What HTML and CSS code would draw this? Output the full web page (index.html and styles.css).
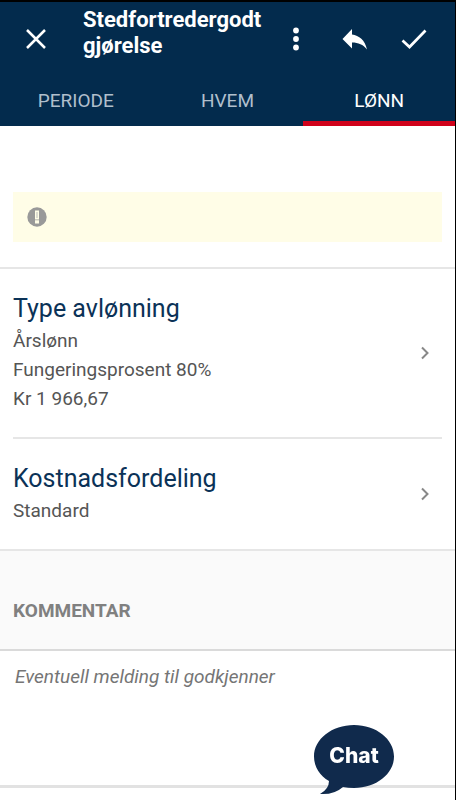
FILE: index.html
```html
<!DOCTYPE html>
<html lang="no">
<head>
<meta charset="utf-8">
<meta name="viewport" content="width=device-width, initial-scale=1">
<title>Stedfortredergodtgjørelse</title>
<link rel="stylesheet" href="styles.css">
</head>
<body>
<header class="header">
  <div class="toolbar">
    <button class="icon-button close" type="button" aria-label="Lukk">
      <svg width="24" height="24" viewBox="0 0 24 24"><path d="M3 3l18 18M21 3L3 21" fill="none" stroke="currentColor" stroke-width="2.500"/></svg>
    </button>
    <h1 class="title">Stedfortredergodt<wbr>gjørelse</h1>
    <div class="actions">
      <button class="icon-button" type="button" aria-label="Meny">
        <svg width="28" height="28" viewBox="0 0 28 28" fill="currentColor"><circle cx="14" cy="5.500" r="2.900"/><circle cx="14" cy="14" r="2.900"/><circle cx="14" cy="22.500" r="2.900"/></svg>
      </button>
      <button class="icon-button" type="button" aria-label="Tilbake">
        <svg width="28" height="28" viewBox="0 0 28 28" fill="currentColor"><path d="M11 4v5.500C18 10.500 24 15 26 24.500 22 19.500 17.500 17.500 11 17.500V23.500L1.500 14z"/></svg>
      </button>
      <button class="icon-button" type="button" aria-label="Lagre">
        <svg width="28" height="28" viewBox="0 0 28 28"><path d="M2.500 15.500l7 6.500L25.500 5.500" fill="none" stroke="currentColor" stroke-width="2.700"/></svg>
      </button>
    </div>
  </div>
  <nav class="tabs">
    <a class="tab" href="#periode">PERIODE</a>
    <a class="tab" href="#hvem">HVEM</a>
    <a class="tab active" href="#lonn" aria-current="page">LØNN</a>
  </nav>
</header>
<main>
  <section class="notice-area">
    <div class="notice">
      <svg width="20" height="20" viewBox="0 0 20 20" role="img" aria-label="Merk"><circle cx="10" cy="10" r="9.700" fill="#999"/><path d="M8 3.500h4v9H8zM8 13.300h4v3.200H8z" fill="#fffde7"/><path d="M9.500 5h1v6h-1z" fill="#bbb"/></svg>
    </div>
  </section>
  <div class="list">
    <a class="row" href="#type">
      <div>
        <h2 class="row-title">Type avlønning</h2>
        <p class="row-text">Årslønn</p>
        <p class="row-text">Fungeringsprosent 80%</p>
        <p class="row-text">Kr 1 966,67</p>
      </div>
      <svg class="chevron" width="10" height="14" viewBox="0 0 10 14"><path d="M2 1.500L7.500 7 2 12.500"/></svg>
    </a>
    <a class="row" href="#fordeling">
      <div>
        <h2 class="row-title">Kostnadsfordeling</h2>
        <p class="row-text">Standard</p>
      </div>
      <svg class="chevron" width="10" height="14" viewBox="0 0 10 14"><path d="M2 1.500L7.500 7 2 12.500"/></svg>
    </a>
  </div>
  <label class="comment-label" for="comment">KOMMENTAR</label>
  <textarea class="comment" id="comment" placeholder="Eventuell melding til godkjenner"></textarea>
</main>
<button class="chat" type="button">
  <svg class="bubble" width="80" height="70" viewBox="0 0 80 70"><path fill="#102a4c" d="M40 0C62 0 80 14 80 31.500S62 63 40 63Q34 63 29 62Q20 70 6 69Q15 64 15 56C6 51 0 42 0 31.500 0 14 18 0 40 0z"/></svg>
  <span class="chat-text">Chat</span>
</button>
</body>
</html>
```
FILE: styles.css
```css
* {
  box-sizing: border-box;
}

body {
  margin: 0;
  min-height: 100vh;
  border-top: 2px solid #000;
  border-right: 1px solid #000;
  background: #fff;
  color: #555;
  font-family: Roboto, "Liberation Sans", sans-serif;
  font-size: 19px;
}

h1, h2, p {
  margin: 0;
}

a {
  color: inherit;
  text-decoration: none;
}

button {
  padding: 0;
  border: 0;
  background: none;
  color: #fff;
  cursor: pointer;
}

svg {
  display: block;
}

.header {
  background: #032b4d;
  color: #fff;
}

.toolbar {
  display: flex;
  align-items: center;
  height: 74px;
  padding: 0 27px 0 24px;
}

.icon-button {
  flex: none;
}

.title {
  flex: 1;
  margin-left: 35px;
  padding-bottom: 12px;
  font-size: 22px;
  line-height: 26px;
  font-weight: 700;
}

.actions {
  display: flex;
  gap: 31px;
}

.tabs {
  display: grid;
  grid-template-columns: repeat(3, 1fr);
}

.tab {
  height: 50px;
  border-bottom: 5px solid transparent;
  color: #b0bfcc;
  line-height: 49px;
  text-align: center;
}

.tab.active {
  border-color: #d0021b;
  color: #fff;
}

.notice-area {
  padding: 66px 13px 25px;
  border-bottom: 2px solid #e6e6e6;
}

.notice {
  display: flex;
  align-items: center;
  height: 50px;
  padding: 0 14px;
  background: #fffde7;
}

.list {
  padding: 0 13px;
  border-bottom: 2px solid #e6e6e6;
}

.row {
  display: flex;
  align-items: center;
  justify-content: space-between;
  padding: 23px 12px 24px 0;
}

.row + .row {
  border-top: 2px solid #e6e6e6;
}

.row-title {
  color: #0b3257;
  font-size: 25px;
  line-height: 34px;
  font-weight: 400;
}

.row-text {
  line-height: 29px;
}

.chevron {
  fill: none;
  stroke: #888;
  stroke-width: 2;
}

.comment-label {
  display: block;
  padding: 45px 13px 23px;
  border-bottom: 2px solid #dadada;
  background: #fafafa;
  color: #808080;
  line-height: 30px;
  font-weight: 700;
}

.comment {
  display: block;
  width: 100%;
  height: 137px;
  padding: 14px 15px;
  border: 0;
  border-bottom: 3px solid #e2e2e2;
  outline: 0;
  resize: none;
  color: #555;
  font: italic 19px/24px Roboto, "Liberation Sans", sans-serif;
}

.comment::placeholder {
  color: #757575;
}

.chat {
  position: fixed;
  right: 62px;
  bottom: 5px;
}

.chat-text {
  position: absolute;
  inset: 0 0 8px;
  display: grid;
  place-items: center;
  font: 800 21px/24px Inter, Roboto, sans-serif;
}
```
